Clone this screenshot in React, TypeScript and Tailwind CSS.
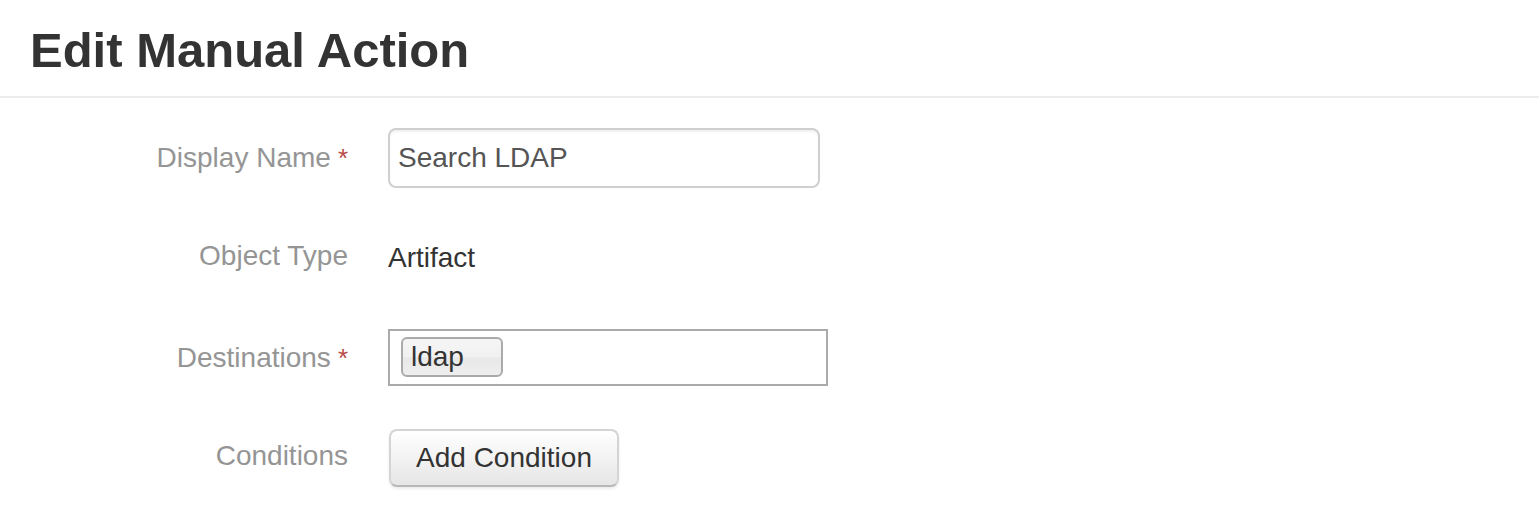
const labelCls = 'text-[28px] text-[#959595] text-right';

const Required = () => <span className="ml-[7px] text-[26px] text-[#b94a48] align-top">*</span>;

export default function App() {
  return (
    <div className="w-[1539px] h-[516px] bg-white font-['Liberation_Sans',Arial,sans-serif] text-[#333] overflow-hidden">
      <div className="h-[98px] pl-[30px] pt-[26px] border-b-2 border-[#ececec]">
        <h1 className="text-[49px] leading-[48px] font-bold">Edit Manual Action</h1>
      </div>

      <div className="pt-[30px] pl-[28px] flex flex-col gap-[40px]">
        <div className="flex items-center h-[60px]">
          <div className="w-[320px] flex justify-end items-center leading-[40px]">
            <span className={labelCls}>Display Name</span>
            <Required />
          </div>
          <div className="ml-[40px]">
            <input
              type="text"
              defaultValue="Search LDAP"
              className="w-[432px] h-[60px] border-2 border-[#cfcfcf] rounded-[8px] px-[8px] text-[28px] text-[#555] outline-none shadow-[inset_0_2px_2px_rgba(0,0,0,0.06)]"
            />
          </div>
        </div>

        <div className="flex items-center h-[60px]">
          <div className="w-[320px] text-right leading-[40px]">
            <span className={labelCls}>Object Type</span>
          </div>
          <div className="ml-[40px] text-[28px] text-[#333] leading-[40px]">Artifact</div>
        </div>

        <div className="flex items-center h-[60px]">
          <div className="w-[320px] flex justify-end items-center leading-[40px]">
            <span className={labelCls}>Destinations</span>
            <Required />
          </div>
          <div className="ml-[40px] mt-[-2px] w-[440px] h-[57px] border-2 border-[#aaa] bg-white pl-[11px] pt-[6px]">
            <span className="inline-flex items-center w-[102px] h-[40px] border-2 border-[#aaa] rounded-[6px] pl-[8px] text-[28px] text-[#333] bg-[linear-gradient(#f4f4f4_20%,#f0f0f0_50%,#e8e8e8_52%,#eeeeee_100%)]">
              ldap
            </span>
          </div>
        </div>

        <div className="flex items-center h-[60px]">
          <div className="w-[320px] text-right leading-[40px]">
            <span className={labelCls}>Conditions</span>
          </div>
          <div className="ml-[41px]">
            <button className="w-[230px] h-[58px] border-2 border-[#d4d4d4] border-b-[#b8b8b8] rounded-[8px] text-[28px] text-[#333] bg-[linear-gradient(#ffffff,#e6e6e6)] shadow-[0_2px_3px_rgba(0,0,0,0.08)]">
              Add Condition
            </button>
          </div>
        </div>
      </div>
    </div>
  );
}
